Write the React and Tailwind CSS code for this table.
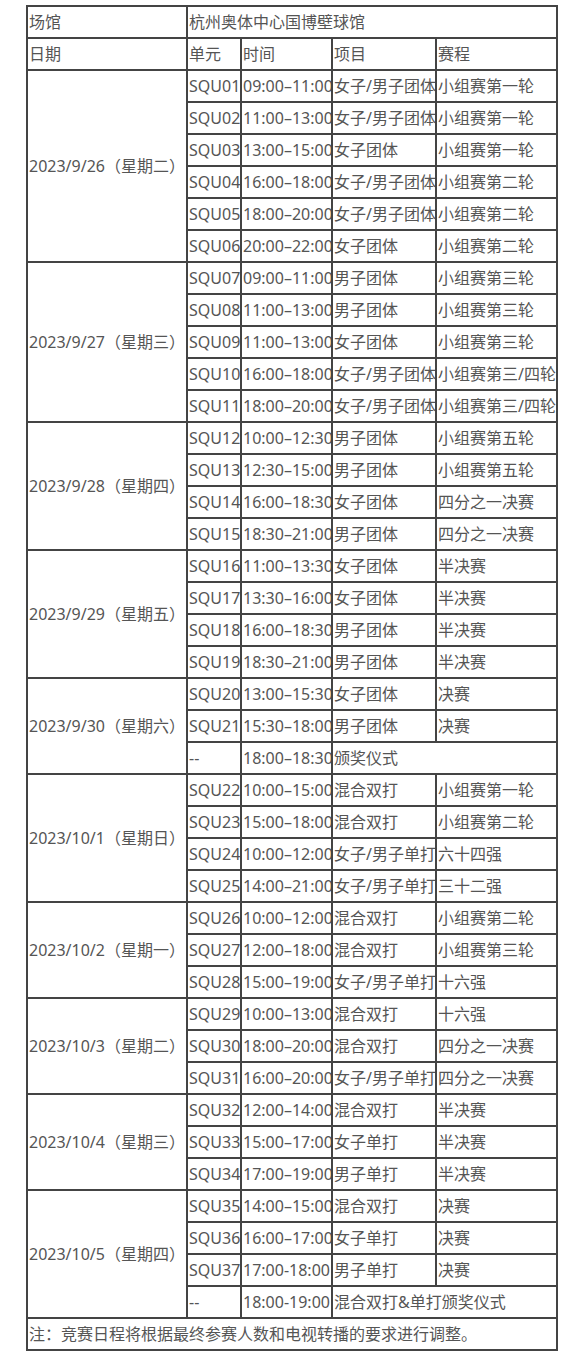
const days = [
  {
    date: '2023/9/26（星期二）',
    rows: [
      ['SQU01', '09:00–11:00', '女子/男子团体', '小组赛第一轮'],
      ['SQU02', '11:00–13:00', '女子/男子团体', '小组赛第一轮'],
      ['SQU03', '13:00–15:00', '女子团体', '小组赛第一轮'],
      ['SQU04', '16:00–18:00', '女子/男子团体', '小组赛第二轮'],
      ['SQU05', '18:00–20:00', '女子/男子团体', '小组赛第二轮'],
      ['SQU06', '20:00–22:00', '女子团体', '小组赛第二轮'],
    ],
  },
  {
    date: '2023/9/27（星期三）',
    rows: [
      ['SQU07', '09:00–11:00', '男子团体', '小组赛第三轮'],
      ['SQU08', '11:00–13:00', '男子团体', '小组赛第三轮'],
      ['SQU09', '11:00–13:00', '女子团体', '小组赛第三轮'],
      ['SQU10', '16:00–18:00', '女子/男子团体', '小组赛第三/四轮'],
      ['SQU11', '18:00–20:00', '女子/男子团体', '小组赛第三/四轮'],
    ],
  },
  {
    date: '2023/9/28（星期四）',
    rows: [
      ['SQU12', '10:00–12:30', '男子团体', '小组赛第五轮'],
      ['SQU13', '12:30–15:00', '男子团体', '小组赛第五轮'],
      ['SQU14', '16:00–18:30', '女子团体', '四分之一决赛'],
      ['SQU15', '18:30–21:00', '男子团体', '四分之一决赛'],
    ],
  },
  {
    date: '2023/9/29（星期五）',
    rows: [
      ['SQU16', '11:00–13:30', '女子团体', '半决赛'],
      ['SQU17', '13:30–16:00', '女子团体', '半决赛'],
      ['SQU18', '16:00–18:30', '男子团体', '半决赛'],
      ['SQU19', '18:30–21:00', '男子团体', '半决赛'],
    ],
  },
  {
    date: '2023/9/30（星期六）',
    rows: [
      ['SQU20', '13:00–15:30', '女子团体', '决赛'],
      ['SQU21', '15:30–18:00', '男子团体', '决赛'],
      ['--', '18:00–18:30', '颁奖仪式'],
    ],
  },
  {
    date: '2023/10/1（星期日）',
    rows: [
      ['SQU22', '10:00–15:00', '混合双打', '小组赛第一轮'],
      ['SQU23', '15:00–18:00', '混合双打', '小组赛第二轮'],
      ['SQU24', '10:00–12:00', '女子/男子单打', '六十四强'],
      ['SQU25', '14:00–21:00', '女子/男子单打', '三十二强'],
    ],
  },
  {
    date: '2023/10/2（星期一）',
    rows: [
      ['SQU26', '10:00–12:00', '混合双打', '小组赛第二轮'],
      ['SQU27', '12:00–18:00', '混合双打', '小组赛第三轮'],
      ['SQU28', '15:00–19:00', '女子/男子单打', '十六强'],
    ],
  },
  {
    date: '2023/10/3（星期二）',
    rows: [
      ['SQU29', '10:00–13:00', '混合双打', '十六强'],
      ['SQU30', '18:00–20:00', '混合双打', '四分之一决赛'],
      ['SQU31', '16:00–20:00', '女子/男子单打', '四分之一决赛'],
    ],
  },
  {
    date: '2023/10/4（星期三）',
    rows: [
      ['SQU32', '12:00–14:00', '混合双打', '半决赛'],
      ['SQU33', '15:00–17:00', '女子单打', '半决赛'],
      ['SQU34', '17:00–19:00', '男子单打', '半决赛'],
    ],
  },
  {
    date: '2023/10/5（星期四）',
    rows: [
      ['SQU35', '14:00–15:00', '混合双打', '决赛'],
      ['SQU36', '16:00–17:00', '女子单打', '决赛'],
      ['SQU37', '17:00-18:00', '男子单打', '决赛'],
      ['--', '18:00-19:00', '混合双打&单打颁奖仪式'],
    ],
  },
];

const cell = 'border border-[#444] h-[32px] px-px py-0 align-middle text-left whitespace-nowrap overflow-hidden';

function App() {
  return (
    <div
      className="w-[577px] min-h-[1368px] bg-white pl-[26px] pt-[5px] text-[16px] text-[#555] leading-[22px]"
      style={{ fontFamily: '"Noto Sans", "Noto Sans CJK SC", sans-serif' }}
    >
      <table className="table-fixed w-[531px] border border-[#444] border-separate border-spacing-0">
        <colgroup>
          <col className="w-[160px]" />
          <col className="w-[54px]" />
          <col className="w-[91px]" />
          <col className="w-[104px]" />
          <col className="w-[121px]" />
        </colgroup>
        <tbody>
          <tr>
            <td className={cell}>场馆</td>
            <td className={cell} colSpan={4}>杭州奥体中心国博壁球馆</td>
          </tr>
          <tr>
            <td className={cell}>日期</td>
            <td className={cell}>单元</td>
            <td className={cell}>时间</td>
            <td className={cell}>项目</td>
            <td className={cell}>赛程</td>
          </tr>
          {days.map((day) =>
            day.rows.map((r, i) => (
              <tr key={day.date + i}>
                {i === 0 && (
                  <td className={cell} rowSpan={day.rows.length}>{day.date}</td>
                )}
                <td className={cell}>{r[0]}</td>
                <td className={cell}>{r[1]}</td>
                {r.length === 4 ? (
                  <>
                    <td className={cell}>{r[2]}</td>
                    <td className={cell}>{r[3]}</td>
                  </>
                ) : (
                  <td className={cell} colSpan={2}>{r[2]}</td>
                )}
              </tr>
            ))
          )}
          <tr>
            <td className={cell} colSpan={5}>注：竞赛日程将根据最终参赛人数和电视转播的要求进行调整。</td>
          </tr>
        </tbody>
      </table>
    </div>
  );
}

export default App;
